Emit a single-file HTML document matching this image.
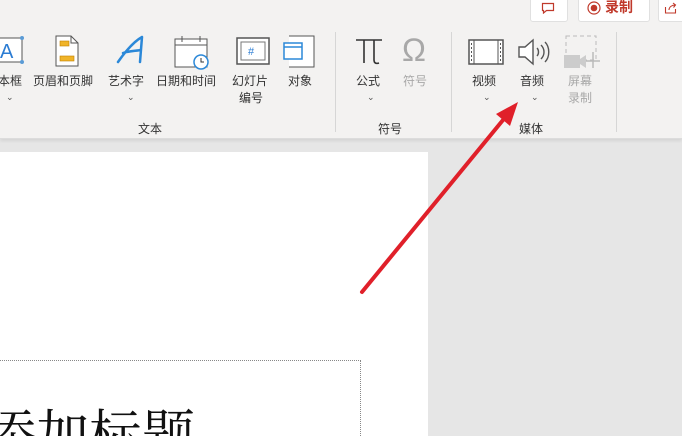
<!DOCTYPE html>
<html style="overflow:hidden;width:682px;height:436px"><head><meta charset="utf-8"><style>
body{margin:0;width:682px;height:436px;overflow:hidden;background:#e6e6e6;position:relative;font-family:"Liberation Sans","Noto Sans CJK SC",sans-serif;}
.rib{position:absolute;left:0;top:0;width:682px;height:138px;background:#f3f2f1;border-bottom:1px solid #dcdcdc;box-shadow:0 2px 3px rgba(0,0,0,.08)}
.t{position:absolute;font-size:12px;color:#333;white-space:nowrap;line-height:15px}
.g{color:#a8a8a8}
.sep{position:absolute;top:32px;width:1px;height:100px;background:#d6d6d6}
.ch{position:absolute;font-size:9px;color:#555}
.slide{position:absolute;left:0;top:152px;width:428px;height:284px;background:#fff;overflow:hidden}
.btn{position:absolute;top:-4px;height:24px;background:#fff;border:1px solid #e0e0e0;border-radius:3px}
</style></head><body>
<div class="rib">
 <div class="btn" style="left:530px;width:36px"></div>
 <svg style="position:absolute;left:541px;top:2px" width="14" height="12"><path d="M1.5 1.5h11v7h-7l-3 2.5v-2.5h-1z" fill="none" stroke="#c0392b" stroke-width="1.2"/></svg>
 <div class="btn" style="left:578px;width:70px"></div>
 <svg style="position:absolute;left:587px;top:1px" width="14" height="14"><circle cx="7" cy="7" r="6" fill="none" stroke="#c0392b" stroke-width="1.2"/><circle cx="7" cy="7" r="3.3" fill="#c0392b"/></svg>
 <div class="t" style="left:605px;top:0px;font-size:14px;font-weight:bold;color:#c0392b">录制</div>
 <div class="btn" style="left:658px;width:30px"></div>
 <svg style="position:absolute;left:664px;top:2px" width="14" height="12"><path d="M1.5 5v6h10V7M5 8c0-3 3-5 6-5M9 1l2.5 2-2 2.5" fill="none" stroke="#c0392b" stroke-width="1.1"/></svg>

 <svg style="position:absolute;left:0;top:36px" width="26" height="30"><rect x="-4" y="2" width="26" height="24" fill="#fff" stroke="#555"/><circle cx="22" cy="2" r="2" fill="#5b9bd5"/><circle cx="22" cy="26" r="2" fill="#5b9bd5"/><text x="0" y="22" font-size="20" fill="#2b7cd3" font-family="Liberation Sans">A</text></svg>
 <div class="t" style="left:-2px;top:74px">本框</div><div class="ch" style="left:6px;top:92px">⌄</div>
 <svg style="position:absolute;left:54px;top:34px" width="26" height="34"><path d="M2 2h15l7 7v23H2z" fill="#fff" stroke="#555"/><path d="M17 2v7h7" fill="none" stroke="#555"/><rect x="6" y="7" width="9" height="5" fill="#f0b429" stroke="#c08000" stroke-width=".6"/><rect x="6" y="22" width="14" height="5" fill="#f0b429" stroke="#c08000" stroke-width=".6"/></svg>
 <div class="t" style="left:33px;top:74px">页眉和页脚</div>
 <svg style="position:absolute;left:115px;top:34px" width="32" height="34"><path d="M3 28C10 18 18 8 27 3M27 3L25 28M8 19c6-2 12-2 18-3" fill="none" stroke="#2b88d8" stroke-width="2.5" stroke-linecap="round"/></svg>
 <div class="t" style="left:108px;top:74px">艺术字</div><div class="ch" style="left:127px;top:92px">⌄</div>
 <svg style="position:absolute;left:173px;top:34px" width="40" height="38"><rect x="2" y="5" width="32" height="28" fill="#fff" stroke="#555"/><line x1="2" y1="11" x2="34" y2="11" stroke="#555"/><line x1="9" y1="2" x2="9" y2="8" stroke="#555"/><line x1="27" y1="2" x2="27" y2="8" stroke="#555"/><circle cx="28" cy="28" r="7" fill="#fff" stroke="#2b88d8" stroke-width="1.5"/><path d="M28 24v4h3" fill="none" stroke="#333"/></svg>
 <div class="t" style="left:156px;top:74px">日期和时间</div>
 <svg style="position:absolute;left:236px;top:36px" width="34" height="30"><rect x="1" y="2" width="32" height="26" fill="#fff" stroke="#555" stroke-width="1.5"/><rect x="5" y="6" width="24" height="18" fill="#fff" stroke="#777"/><text x="12" y="19" font-size="11" fill="#2b7cd3" font-family="Liberation Sans">#</text></svg>
 <div class="t" style="left:232px;top:74px">幻灯片</div><div class="t" style="left:239px;top:91px">编号</div>
 <svg style="position:absolute;left:283px;top:35px" width="34" height="34"><path d="M6 1h25v31H6" fill="#fff" stroke="#555"/><rect x="1" y="8" width="18" height="16" fill="#fff" stroke="#2b88d8" stroke-width="1.5"/><line x1="1" y1="12" x2="19" y2="12" stroke="#2b88d8" stroke-width="1.5"/></svg>
 <div class="t" style="left:288px;top:74px">对象</div>
 <div class="t" style="left:138px;top:122px">文本</div>
 <div class="sep" style="left:335px"></div>
 <svg style="position:absolute;left:354px;top:36px" width="30" height="30"><path d="M2 4h26M10 4v23M20 4v20c0 3 2 4 5 3" fill="none" stroke="#333" stroke-width="1.6"/></svg>
 <div class="t" style="left:356px;top:74px">公式</div><div class="ch" style="left:367px;top:92px">⌄</div>
 <div class="t g" style="left:402px;top:30px;font-size:32px;line-height:40px;font-family:'Liberation Sans',sans-serif">Ω</div>
 <div class="t g" style="left:403px;top:74px">符号</div>
 <div class="t" style="left:378px;top:122px">符号</div>
 <div class="sep" style="left:451px"></div>
 <svg style="position:absolute;left:468px;top:39px" width="36" height="26"><rect x="1" y="1" width="34" height="24" fill="#fff" stroke="#555" stroke-width="1.5"/><line x1="6" y1="1" x2="6" y2="25" stroke="#555"/><line x1="30" y1="1" x2="30" y2="25" stroke="#555"/><path d="M3.5 4v18M32.5 4v18" stroke="#555" stroke-dasharray="2 2"/></svg>
 <div class="t" style="left:472px;top:74px">视频</div><div class="ch" style="left:483px;top:92px">⌄</div>
 <svg style="position:absolute;left:516px;top:37px" width="36" height="30"><path d="M3 10h6l8-7v24l-8-7H3z" fill="#fff" stroke="#555" stroke-width="1.4"/><path d="M21 11c2 2 2 6 0 8M25 8c4 4 4 10 0 14M29 5c5 5 5 15 0 20" fill="none" stroke="#555" stroke-width="1.4"/></svg>
 <div class="t" style="left:520px;top:74px">音频</div><div class="ch" style="left:531px;top:92px">⌄</div>
 <svg style="position:absolute;left:562px;top:34px" width="42" height="40"><rect x="4" y="2" width="30" height="24" fill="none" stroke="#bbb" stroke-dasharray="4 3"/><rect x="2" y="21" width="16" height="13" fill="#ccc"/><path d="M18 25l6-4v13l-6-4z" fill="#ccc"/><path d="M31 18v16M24 27h14" stroke="#bbb" stroke-width="1.5"/></svg>
 <div class="t g" style="left:568px;top:74px">屏幕</div><div class="t g" style="left:568px;top:91px">录制</div>
 <div class="t" style="left:519px;top:122px">媒体</div>
 <div class="sep" style="left:616px"></div>
</div>
<div class="slide">
 <div style="position:absolute;left:-2px;top:208px;width:361px;height:100px;border:1px dotted #888"></div>
 <div style="position:absolute;left:-17px;top:256px;font-size:53px;line-height:56px;font-family:'Liberation Serif','Noto Serif CJK SC',serif;color:#111;white-space:nowrap">添加标题</div>
</div>
<svg style="position:absolute;left:0;top:0" width="682" height="436"><line x1="362" y1="292" x2="503" y2="120" stroke="#e0202a" stroke-width="4" stroke-linecap="round"/><path d="M518 102L496 114L510 126z" fill="#e0202a"/></svg>
</body></html>
